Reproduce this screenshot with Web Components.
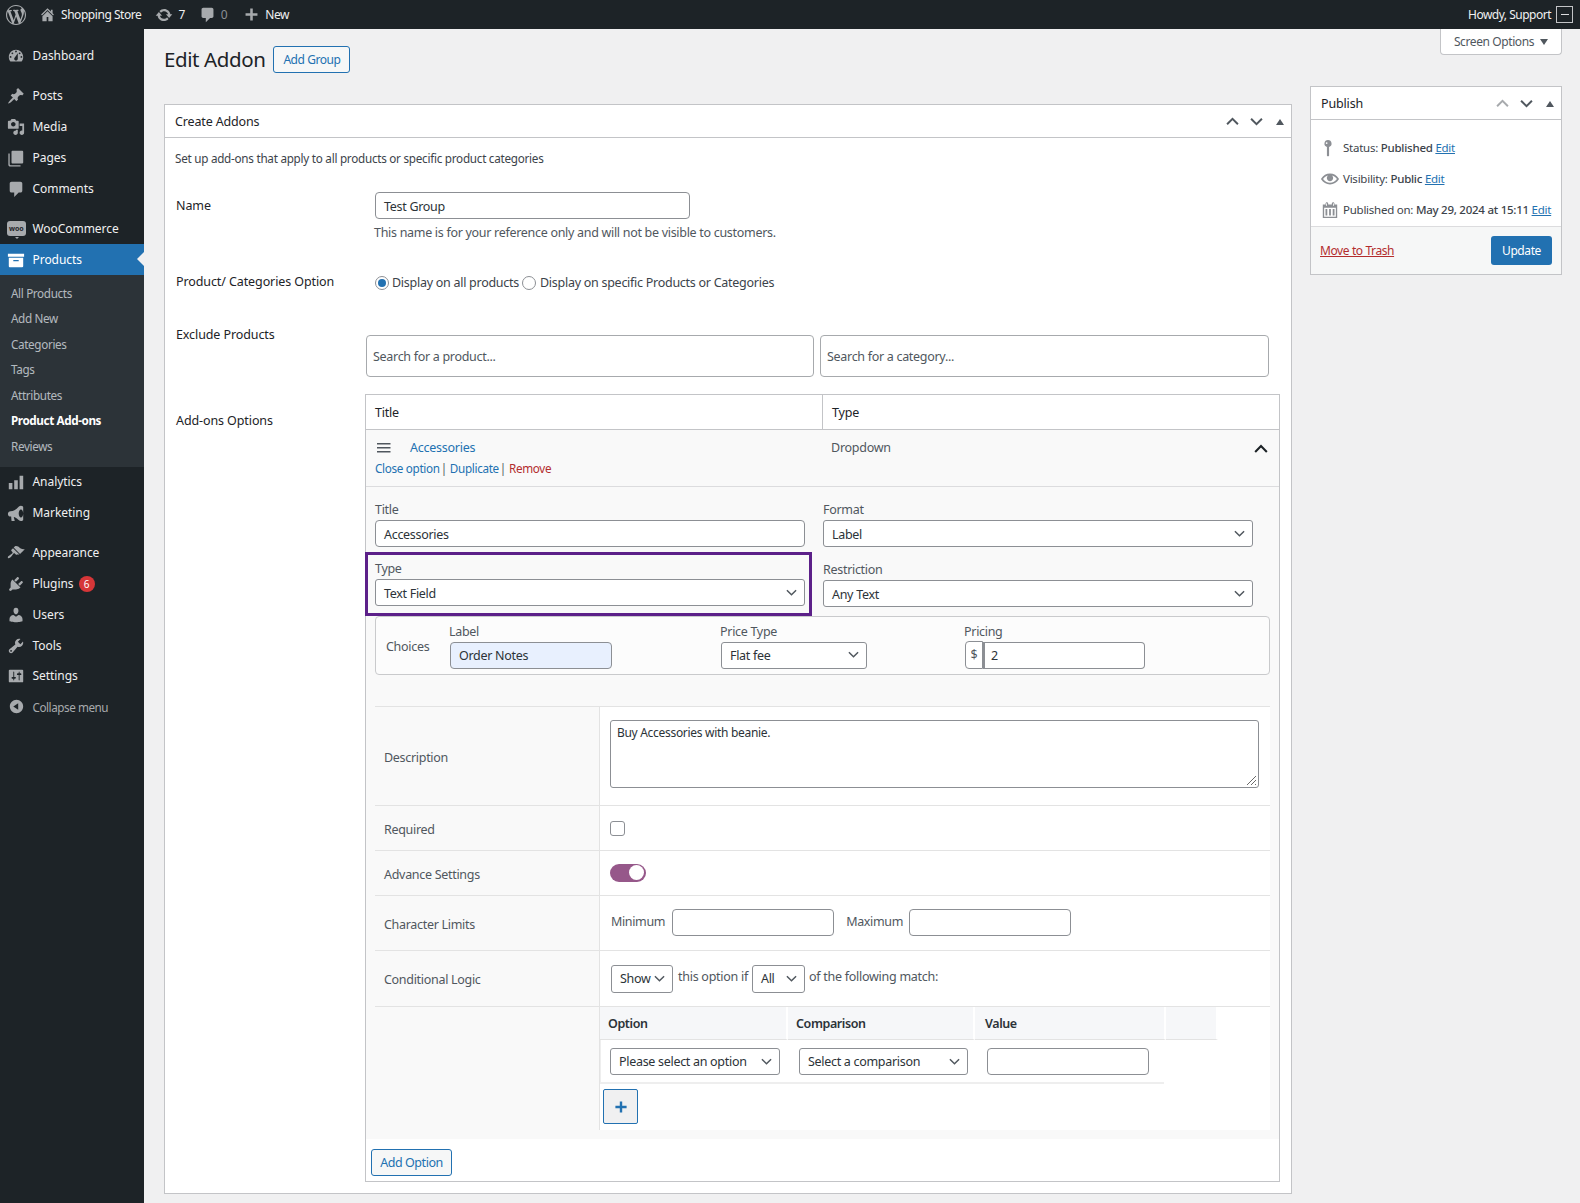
<!DOCTYPE html>
<html lang="en"><head><meta charset="utf-8"><title>Edit Addon</title>
<style>
html,body{margin:0;padding:0}
body{background:#f0f0f1;color:#3c434a;font:12px/16px "Noto Sans","Open Sans",sans-serif;letter-spacing:-.25px;min-height:1203px}
</style></head><body>
<wp-app></wp-app>
<script>
const base=`*{box-sizing:border-box}:host{display:block}a{color:#2271b1;text-decoration:none}`;
const P={
 wp:"M20 10c0-5.51-4.49-10-10-10C4.48 0 0 4.49 0 10c0 5.52 4.48 10 10 10 5.51 0 10-4.48 10-10zM7.78 15.37L4.37 6.22c.55-.02 1.17-.08 1.17-.08.5-.06.44-1.13-.06-1.11 0 0-1.45.11-2.37.11-.18 0-.37 0-.58-.01C4.12 2.69 6.87 1.11 10 1.11c2.33 0 4.45.87 6.05 2.34-.68-.11-1.65.39-1.65 1.58 0 .74.45 1.36.9 2.1.35.61.55 1.36.55 2.46 0 1.49-1.4 5-1.4 5l-3.03-8.37c.54-.02.82-.17.82-.17.5-.05.44-1.25-.06-1.22 0 0-1.44.12-2.38.12-.87 0-2.33-.12-2.33-.12-.5-.03-.56 1.2-.06 1.22l.92.08 1.26 3.41zM17.41 10c.24-.64.74-1.87.43-4.25.7 1.29 1.05 2.71 1.05 4.25 0 3.29-1.73 6.24-4.4 7.78.97-2.59 1.94-5.2 2.92-7.78zM6.1 18.09C3.12 16.65 1.11 13.53 1.11 10c0-1.3.23-2.48.72-3.59C3.25 10.3 4.67 14.2 6.1 18.09zm4.03-6.63l2.58 6.98c-.86.29-1.76.45-2.71.45-.79 0-1.57-.11-2.29-.33.81-2.38 1.62-4.74 2.42-7.1z",
 home:"M16 8.5l1.53 1.53-1.06 1.06L10 4.62l-6.47 6.47-1.06-1.06L10 2.5l4 4v-2h2v4zm-6-2.46l6 5.99V18h-5v-5H9v5H4v-5.97z",
 update:"M10.2 3.28c3.53 0 6.43 2.61 6.92 6h2.08l-3.5 4-3.5-4h2.32c-.45-1.97-2.21-3.45-4.32-3.45-1.45 0-2.73.71-3.54 1.78L4.95 5.66C6.23 4.2 8.11 3.28 10.2 3.28zm-.4 13.44c-3.52 0-6.43-2.61-6.92-6H.8l3.5-4c1.17 1.33 2.33 2.67 3.5 4H5.48c.45 1.97 2.21 3.45 4.32 3.45 1.45 0 2.73-.71 3.54-1.78l1.71 1.95c-1.28 1.46-3.15 2.38-5.25 2.38z",
 comment:"M5 2h10c1.1 0 2 .9 2 2v8c0 1.1-.9 2-2 2h-2l-5 5v-5H5c-1.1 0-2-.9-2-2V4c0-1.1.9-2 2-2z",
 plus:"M17 8.5v3h-5.5V17h-3v-5.5H3v-3h5.5V3h3v5.5z",
 dashboard:"M3.76 16h12.48c1.1-1.37 1.76-3.11 1.76-5 0-4.42-3.58-8-8-8s-8 3.58-8 8c0 1.89.66 3.63 1.76 5zM10 4c.55 0 1 .45 1 1s-.45 1-1 1-1-.45-1-1 .45-1 1-1zM6 6c.55 0 1 .45 1 1s-.45 1-1 1-1-.45-1-1 .45-1 1-1zm8 0c.55 0 1 .45 1 1s-.45 1-1 1-1-.45-1-1 .45-1 1-1zm-5.37 5.55L12 7v6c0 1.1-.9 2-2 2s-2-.9-2-2c0-.57.24-1.08.63-1.45zM4 10c.55 0 1 .45 1 1s-.45 1-1 1-1-.45-1-1 .45-1 1-1zm12 0c.55 0 1 .45 1 1s-.45 1-1 1-1-.45-1-1 .45-1 1-1z",
 pin:"M10.44 3.02l1.82-1.82 6.36 6.35-1.83 1.82c-1.05-.68-2.48-.57-3.41.36l-.75.75c-.92.93-1.04 2.35-.35 3.41l-1.83 1.82-2.41-2.41-2.8 2.79c-.42.42-3.38 2.71-3.8 2.29s1.86-3.39 2.28-3.81l2.79-2.79L4.1 9.36l1.83-1.82c1.05.69 2.48.57 3.4-.36l.75-.75c.93-.92 1.05-2.35.36-3.41z",
 media:"M13 11V4c0-.55-.45-1-1-1h-1.67L9 1H5L3.67 3H2c-.55 0-1 .45-1 1v7c0 .55.45 1 1 1h10c.55 0 1-.45 1-1zM7 4.5c1.38 0 2.5 1.12 2.5 2.5S8.38 9.5 7 9.5 4.5 8.38 4.5 7 5.62 4.5 7 4.5zM14 6h5v10.5c0 1.38-1.12 2.5-2.5 2.5S14 17.88 14 16.5s1.12-2.5 2.5-2.5c.17 0 .34.02.5.05V9h-3V6zm-4 8.05V13h2v3.5c0 1.38-1.12 2.5-2.5 2.5S7 17.88 7 16.5 8.12 14 9.5 14c.17 0 .34.02.5.05z",
 pages:"M6 2h11c.55 0 1 .45 1 1v12c0 .55-.45 1-1 1H6c-.55 0-1-.45-1-1V3c0-.55.45-1 1-1zM3 5v12c0 .55.45 1 1 1h11v1.5H3.5c-1 0-2-.8-2-2V5z",
 archive:"M19 3v3.5H1V3h18zM2 7.5h16V17c0 .55-.45 1-1 1H3c-.55 0-1-.45-1-1V7.5zM7 10v1.5h6V10H7z",
 analytics:"M2 11h4v7H2zM8 8h4v10H8zM14 3h4v15h-4z",
 marketing:"M18 3.5c0-.6-.7-1.5-2.5-1.5S12 4 11 5 7 8 4 8c-1.7 0-3 1.3-3 3s1.300 3 3 3h.6L5 18.500c.1.5.5.500 1 .500h2c.5 0 .7-.4.5-.8L7.500 14.500c1.500.300 3 1.200 3.500 1.700 1 1 2.700 2.800 4.500 2.800S18 18 18 17.500zM15.500 15c-1.400 0-2.500-2-2.500-4.500S14.100 6 15.500 6 18 8 18 10.500 16.900 15 15.500 15z",
 appearance:"M14.48 11.06L7.41 3.99l1.5-1.5c.5-.56 2.3-.47 3.51.32 1.21.8 1.43 1.28 2.91 2.1 1.18.64 2.45 1.26 4.45.85zm-.71.71L6.7 4.7 4.93 6.47c-.39.39-.39 1.02 0 1.41l1.06 1.06c.39.39.39 1.03 0 1.42-.6.6-1.43 1.11-2.21 1.69-.35.26-.7.53-1.01.84C1.43 13.23.4 14.84 1.1 15.54c.71.7 2.31-.33 3.65-1.67.31-.31.58-.66.85-1.01.57-.78 1.08-1.61 1.69-2.21.39-.39 1.02-.39 1.41 0l1.06 1.06c.39.39 1.02.39 1.41 0z",
 plugins:"M13.11 4.36L9.87 7.6 8 5.73l3.24-3.24c.35-.34 1.05-.2 1.56.32.52.51.66 1.21.31 1.55zm-8 1.77l.91-1.12 9.01 9.01-1.19.84c-.71.71-2.63 1.16-3.82 1.16H6.14L4.9 17.26c-.59.59-1.54.59-2.12 0-.59-.58-.59-1.53 0-2.12l1.24-1.24v-3.88c0-1.13.4-3.19 1.09-3.89zm7.26 3.97l3.24-3.24c.34-.35 1.04-.21 1.55.31.52.51.66 1.21.31 1.55l-3.24 3.25z",
 users:"M10 9.25c-2.27 0-2.73-3.44-2.73-3.44C7 4.02 7.82 2 9.97 2c2.16 0 2.98 2.02 2.71 3.81 0 0-.41 3.44-2.68 3.44zm0 2.57L12.72 10c2.39 0 4.52 2.33 4.52 4.53v2.49s-3.65 1.13-7.24 1.13c-3.65 0-7.24-1.13-7.24-1.13v-2.49c0-2.25 1.94-4.48 4.47-4.48z",
 tools:"M16.68 9.77c-1.34 1.34-3.3 1.67-4.95.99l-5.41 6.52c-.99.99-2.59.99-3.58 0s-.99-2.59 0-3.57l6.52-5.42c-.68-1.65-.35-3.61.99-4.95 1.28-1.28 3.12-1.62 4.72-1.06l-2.89 2.89 2.82 2.82 2.86-2.87c.53 1.58.18 3.39-1.08 4.65zM3.81 16.21c.4.39 1.04.39 1.43 0 .4-.4.4-1.04 0-1.43-.39-.4-1.03-.4-1.43 0-.39.39-.39 1.03 0 1.43z",
 settings:"M18 16V4c0-.55-.45-1-1-1H3c-.55 0-1 .45-1 1v12c0 .55.45 1 1 1h14c.55 0 1-.45 1-1zM8 11h1c.55 0 1 .45 1 1s-.45 1-1 1H8v1.5c0 .28-.22.5-.5.5s-.5-.22-.5-.5V13H6c-.55 0-1-.45-1-1s.45-1 1-1h1V5.5c0-.28.22-.5.5-.5s.5.22.5.5V11zm5-2h-1c-.55 0-1-.45-1-1s.45-1 1-1h1V5.500c0-.28.22-.5.5-.5s.5.22.5.5V7h1c.55 0 1 .45 1 1s-.45 1-1 1h-1v5.500c0 .28-.22.5-.5.5s-.5-.22-.5-.5V9z",
 collapse:"M10 2.16c4.33 0 7.84 3.51 7.84 7.84s-3.51 7.84-7.84 7.84S2.16 14.33 2.16 10 5.71 2.160 10 2.160zm2 11.72V6.120L6.180 9.970z",
 key:"M10 1a4 4 0 0 1 1.200 7.800V18.500L10 19.500 8.800 18.500V8.800A4 4 0 0 1 10 1zM8.500 3.500a1 1 0 1 0 0 2 1 1 0 0 0 0-2z",
 eye:"M19.700 9.400C17.700 6 14 3.900 10 3.900S2.300 6 .3 9.400L0 10l.3.6c2 3.400 5.700 5.500 9.700 5.500s7.700-2.100 9.700-5.500l.3-.6-.3-.6zM10 14.100c-3.100 0-6-1.600-7.700-4.100C3.600 8 5.700 6.600 8 6.100c-.9.600-1.500 1.700-1.500 2.900 0 1.900 1.600 3.500 3.500 3.500s3.500-1.600 3.500-3.500c0-1.200-.6-2.300-1.500-2.900 2.300.5 4.400 1.900 5.700 3.900-1.700 2.500-4.600 4.100-7.700 4.100z",
 cal:"M15 4h3v15H2V4h3V3c0-.41.15-.76.44-1.060.29-.29.65-.44 1.060-.44s.77.15 1.060.44c.29.3.44.65.44 1.060v1h4V3c0-.41.15-.76.44-1.060.29-.29.65-.44 1.060-.44s.77.15 1.060.44c.29.3.44.65.44 1.060v1zM6 5.500c.28 0 .5-.22.5-.5V3c0-.28-.22-.5-.5-.5S5.500 2.720 5.500 3v2c0 .28.22.5.5.5zm8 0c.28 0 .5-.22.5-.5V3c0-.28-.22-.5-.5-.5s-.5.22-.5.5v2c0 .28.22.5.5.5zM16.500 17.500V7.500h-13v10zM5 9h2v7H5zM9 9h2v7H9zM13 9h2v7h-2z"
};
const ico=(n,s=20,c='currentColor')=>`<svg width="${s}" height="${s}" viewBox="0 0 20 20" fill="${c}" fill-rule="evenodd" aria-hidden="true"><path d="${P[n]}"/></svg>`;
const chev=(dir,s=12,c='#50575e',w=2)=>`<svg width="${s}" height="${s}" viewBox="0 0 12 12" fill="none" stroke="${c}" stroke-width="${w}" aria-hidden="true"><path d="${dir=='up'?'M1 8.500 6 3.500l5 5':'M1 3.500l5 5 5-5'}"/></svg>`;
function def(tag,css,html){customElements.define(tag,class extends HTMLElement{connectedCallback(){if(this.shadowRoot)return;const r=this.attachShadow({mode:'open'});r.innerHTML=`<style>${base}${css}</style>`+(typeof html=='function'?html(this):html)}})}

def('wp-adminbar',`:host{height:29px;background:#1d2327;color:#f0f0f1;display:flex;align-items:center;font-size:12px;letter-spacing:-.45px}
 svg{color:#a7aaad;flex:none;display:block} .l{display:flex;align-items:center;flex:1}
 .avatar{width:17px;height:17px;border:1px solid #c3c4c7;margin:0 7px 0 5px;display:flex;align-items:center;justify-content:center}
 .avatar i{width:8px;height:1px;background:#dcdcde;display:block}
 .dim{color:#8c8f94}`,
`<div class="l"><span style="margin-left:6px;display:flex">${ico('wp',20)}</span>
 <span style="margin-left:13px;display:flex">${ico('home',17)}</span><span style="margin-left:5px">Shopping Store</span>
 <span style="margin-left:14px;display:flex">${ico('update',18)}</span><span style="margin-left:5px">7</span>
 <span style="margin-left:14px;display:flex">${ico('comment',17)}</span><span class="dim" style="margin-left:5px">0</span>
 <span style="margin-left:16px;display:flex">${ico('plus',17)}</span><span style="margin-left:5px">New</span></div>
 <span style="letter-spacing:-.5px">Howdy, Support</span><span class="avatar"><i></i></span>`);

def('wp-menu-item',`:host{display:flex;height:31px;align-items:center;color:#f0f0f1;position:relative;letter-spacing:-.05px}
 :host([sep]){margin-top:9px}
 :host([tight]){margin-top:-.5px}
 :host([current]){background:#2271b1;color:#fff}
 :host([dim]){color:#a7aaad;font-size:11.7px;letter-spacing:-.45px}
 .i{width:32.500px;display:flex;justify-content:center;color:#a7aaad;flex:none}
 :host([current]) .i{color:#fff}
 .b{margin-left:5px;width:16px;height:16px;border-radius:50%;background:#d63638;color:#fff;font-size:10px;line-height:16px;text-align:center}
 .n{position:absolute;right:0;top:8px;border:7.500px solid transparent;border-left:0;border-right:7px solid #f0f0f1}
 .woo{width:19px;height:15px;background:#a7aaad;border-radius:3px;color:#1d2327;font-size:7px;line-height:15px;text-align:center;font-weight:700;position:relative}
 .woo:after{content:"";position:absolute;left:8px;bottom:-3px;border:2px solid transparent;border-top-color:#a7aaad;border-bottom:0}`,
 h=>{const n=h.getAttribute('icon');return `<span class="i">${n=='woo'?'<span class="woo">woo</span>':ico(n,n=='collapse'?17:18)}</span><span><slot></slot></span>`+(h.hasAttribute('badge')?`<span class="b">${h.getAttribute('badge')}</span>`:'')+(h.hasAttribute('current')?'<span class="n"></span>':'')});

def('wp-sub-item',`:host{height:25.600px;line-height:25.600px;padding-left:11px;color:rgba(240,246,252,.7);font-size:11.700px;letter-spacing:-.35px}
 :host([active]){color:#fff;font-weight:700;letter-spacing:-.4px}`,`<slot></slot>`);

def('wp-sidebar',`:host{background:#1d2327;padding-top:11px;min-height:1174px}
 .sub{background:#2c3338;padding:5.500px 0 7px}`,
`<wp-menu-item icon="dashboard">Dashboard</wp-menu-item>
<wp-menu-item icon="pin" sep>Posts</wp-menu-item><wp-menu-item icon="media">Media</wp-menu-item><wp-menu-item icon="pages">Pages</wp-menu-item><wp-menu-item icon="comment">Comments</wp-menu-item>
<wp-menu-item icon="woo" sep>WooCommerce</wp-menu-item><wp-menu-item icon="archive" current>Products</wp-menu-item>
<div class="sub"><wp-sub-item>All Products</wp-sub-item><wp-sub-item>Add New</wp-sub-item><wp-sub-item>Categories</wp-sub-item><wp-sub-item>Tags</wp-sub-item><wp-sub-item>Attributes</wp-sub-item><wp-sub-item active>Product Add-ons</wp-sub-item><wp-sub-item>Reviews</wp-sub-item></div>
<wp-menu-item icon="analytics">Analytics</wp-menu-item><wp-menu-item icon="marketing">Marketing</wp-menu-item>
<wp-menu-item icon="appearance" sep>Appearance</wp-menu-item><wp-menu-item icon="plugins" badge="6">Plugins</wp-menu-item><wp-menu-item icon="users">Users</wp-menu-item><wp-menu-item icon="tools" tight>Tools</wp-menu-item><wp-menu-item icon="settings" tight>Settings</wp-menu-item><wp-menu-item icon="collapse" dim tight>Collapse menu</wp-menu-item>`);

def('wp-btn',`:host{display:inline-flex;align-items:center;justify-content:center;height:27px;border:1px solid #2271b1;border-radius:3px;background:#f6f7f7;color:#2271b1;white-space:nowrap;letter-spacing:-.45px}`,`<slot></slot>`);
def('wp-input',`:host{display:flex;align-items:center;height:27px;border:1px solid #8c8f94;border-radius:4px;background:#fff;padding:0 8px;color:#2c3338;white-space:nowrap;flex:none;font-size:12.500px;letter-spacing:-.3px}
 :host([filled]){background:#e8f0fe}
 :host([ph]){height:42px;color:#50575e;padding:2px 6px 0;border-color:#a7aaad}`,`<slot></slot>`);
def('wp-select',`:host{display:flex;align-items:center;justify-content:space-between;height:27px;border:1px solid #8c8f94;border-radius:3px;background:#fff;padding:0 7px 0 8px;color:#2c3338;white-space:nowrap;flex:none;font-size:12.500px;letter-spacing:-.3px}
 svg{transform:translateY(-1px)}`,`<slot></slot>${chev('down',11,'#50575e',1.600)}`);
def('wp-box',`:host{background:#fff;border:1px solid #c3c4c7}
 .h{height:33px;border-bottom:1px solid #c3c4c7;display:flex;align-items:center;padding:1px 7px 0 10px;color:#1d2327;font-size:12.500px;letter-spacing:-.15px}
 .t{flex:1}.c{display:flex;width:23.500px;justify-content:center}
 .tri{width:0;height:0;border:4.500px solid transparent;border-top:0;border-bottom:6px solid #50575e;margin-left:8px}`,
 h=>`<div class="h"><span class="t">${h.getAttribute('title')}</span><span class="c">${chev('up',13,h.hasAttribute('fade')?'#a7aaad':'#50575e',1.800)}</span><span class="c">${chev('down',13,'#50575e',1.800)}</span><span class="tri"></span></div><slot></slot>`);

def('wp-publish',`:host{font-size:11.500px;letter-spacing:-.25px} .r{display:flex;align-items:center;height:31px;padding-left:10px;white-space:nowrap}
 .b{padding-top:12px;padding-bottom:1px}.r svg{flex:none;margin-right:4px;color:#8c8f94}
 .r svg.k{margin:0 6px 0 -2px}
 b{font-weight:500;color:#3c434a} a{text-decoration:underline}
 .f{height:48px;background:#f6f7f7;border-top:1px solid #dcdcde;display:flex;align-items:center;justify-content:space-between;padding:0 9px 0 9px;font-size:12px;letter-spacing:-.4px}
 .f a{color:#b32d2e;margin:0} .u{height:29px;width:61px;border-radius:3px;background:#2271b1;color:#fff;display:flex;align-items:center;justify-content:center}`,
`<div class="b"><div class="r">${ico('key',18).replace('<svg','<svg class="k"')}<span>Status: <b>Published</b> <a>Edit</a></span></div>
<div class="r">${ico('eye',18)}<span>Visibility: <b>Public</b> <a>Edit</a></span></div>
<div class="r">${ico('cal',18)}<span>Published on: <b>May 29, 2024 at 15:11</b> <a>Edit</a></span></div></div>
<div class="f"><a>Move to Trash</a><span class="u">Update</span></div>`);

def('addon-row',`:host{display:grid;grid-template-columns:224px 671px;width:895px;border-top:1px solid #e3e3e3;color:#50575e;letter-spacing:-.3px}
 .l{padding:3px 0 0 9px;display:flex;align-items:center}
 .r{background:#fff;border-left:1px solid #e3e3e3;padding-left:10px;display:flex;align-items:center}
 :host([tall]) .r{padding-left:0;display:block}`,h=>`<div class="l" style="${h.hasAttribute('tall')?'align-items:start':''}">${h.getAttribute('label')||''}</div><div class="r" style="height:${h.getAttribute('h')}px"><slot></slot></div>`);

def('addon-subtable',`:host{color:#1d2327}
 .g{display:grid;grid-template-columns:188px 187px 189px 54px}
 .h{grid-template-columns:188px 187px 191px 52px}
 .h>div{background:#f6f7f9;height:33px;padding-top:1px;border-bottom:1px solid #e3e3e3;border-right:2px solid #fff;padding-left:8px;display:flex;align-items:center;font-weight:600;color:#2c3338;letter-spacing:-.4px}
 .h>div:nth-child(3){padding-left:10px}
 .c{height:44px;border-bottom:2px solid #eee;display:flex;align-items:center;padding-left:9px;border-left:1px solid #eee}
 .c+.c{padding-left:11px;border-left:0}
 .c+.c+.c{padding-left:12px}
 .c wp-select{padding-top:2px}
 .p{margin:5px 0 0 3px;width:35px;height:35px;border:1px solid #2271b1;border-radius:2px;background:#f0f0f1;color:#2271b1;display:flex;align-items:center;justify-content:center}`,
`<div class="g h"><div>Option</div><div>Comparison</div><div>Value</div><div></div></div>
<div class="g"><div class="c"><wp-select style="width:170px">Please select an option</wp-select></div><div class="c"><wp-select style="width:169px">Select a comparison</wp-select></div><div class="c"><wp-input style="width:162px"></wp-input></div></div>
<div class="p">${ico('plus',16)}</div>`);

def('addon-item',`:host{border:1px solid #c3c4c7;width:915px;color:#3c434a}
 .th{display:grid;grid-template-columns:457px 1fr;height:35px;border-bottom:1px solid #c3c4c7;color:#1d2327;font-size:12.500px;letter-spacing:-.2px}
 .th div{display:flex;align-items:center;padding:2px 0 0 9px}.th div:first-child{border-right:1px solid #c3c4c7}
 .it{background:#f9f9f9;height:57px;border-bottom:1px solid #dcdcde;padding:9px 0 0 9px;display:grid;grid-template-columns:456px 1fr 27px;grid-template-rows:20px 20px}
 .ham{display:flex;align-items:center;gap:19px;margin-top:-3px;font-size:12.500px;letter-spacing:-.25px}.ham svg{margin-left:2px}
 .ln{grid-column:1/3;margin-top:1px;white-space:nowrap;letter-spacing:-.32px;font-size:11.700px;display:flex}.ln i{font-style:normal;color:#50575e;margin:0 3px 0 1px}.ln .rm{color:#b32d2e}
 .form{background:#f9f9f9;padding:14px 0 9px 9px;letter-spacing:-.3px}
 .two{display:grid;grid-template-columns:430px 430px;column-gap:18px}
 .lab{height:16px;color:#50575e;display:block;white-space:nowrap}
 .first .lab{line-height:18px}
 .first wp-input,.hi wp-select,.first wp-select{padding-top:2px}
 .hi{position:relative;margin-top:14px}
 .frame{position:absolute;left:-10px;top:-9px;width:447px;height:64px;border:3px solid #5c2089;pointer-events:none}
 .ch{margin-top:9px;width:895px;height:59px;border:1px solid #c9cacc;border-radius:4px;background:#fcfcfc;display:grid;grid-template-columns:64px 271px 244px 1fr;padding:7px 0 0 10px;color:#50575e}
 .ch .t{padding-top:15px}.ch wp-input,.ch wp-select{margin-top:2px}
 .tb{margin-top:31px}
 .pr{display:flex}.pr span{width:18px;height:28px;margin-top:1px;border:1px solid #8c8f94;border-radius:4px 0 0 4px;display:flex;align-items:center;justify-content:center;background:#fff}
 .pr wp-input{border-radius:0 4px 4px 0;border-left-width:2px;width:162px;padding-left:6px}
 .area{width:649px;height:68px;border:1px solid #8c8f94;border-radius:3px;background:#fff;padding:4px 6px;position:relative;color:#2c3338;margin-top:-4px;font-size:12px;letter-spacing:-.3px}
 .area svg{position:absolute;right:1px;bottom:1px}
 .cb{width:15px;height:15px;border:1px solid #8c8f94;border-radius:3px;background:#fff;margin-top:1px}
 .tg{width:36px;height:18px;border-radius:9px;background:#96588a;display:flex;justify-content:flex-end;align-items:center;padding:0 2px;margin-top:-1px}.tg i{width:15px;height:15px;background:#fff;border-radius:50%;display:block}
 .fl{display:flex;align-items:center;color:#50575e;white-space:nowrap;letter-spacing:-.35px}
 .add{background:#fff;padding:10px 0 5px 5px}.add wp-btn{width:81px}`,
`<div class="th"><div>Title</div><div>Type</div></div>
<div class="it"><div class="ham"><svg width="14" height="10" viewBox="0 0 14 10" fill="#50575e"><path d="M0 0h13.500v1.500H0zM0 4h13.500v1.500H0zM0 8h13.500v1.500H0z"/></svg><a>Accessories</a></div><div style="color:#50575e;padding-top:1px;font-size:12.500px;letter-spacing:-.25px">Dropdown</div><div style="margin:3px 0 0 2px">${chev('up',14,'#1d2327',1.800)}</div>
<div class="ln"><a>Close option</a><i>|</i><a>Duplicate</a><i>|</i><a class="rm">Remove</a></div></div>
<div class="form">
 <div class="two first"><div><span class="lab">Title</span><wp-input style="margin-top:3px">Accessories</wp-input></div><div><span class="lab">Format</span><wp-select style="margin-top:3px">Label</wp-select></div></div>
 <div class="two hi"><div><div class="frame"></div><span class="lab">Type</span><wp-select style="margin-top:2px">Text Field</wp-select></div><div style="padding-top:1px"><span class="lab">Restriction</span><wp-select style="margin-top:2px">Any Text</wp-select></div></div>
 <div class="ch"><div class="t">Choices</div><div><span class="lab" style="margin-left:-1px">Label</span><wp-input filled style="width:162px">Order Notes</wp-input></div><div><span class="lab" style="margin-left:-1px">Price Type</span><wp-select style="width:146px">Flat fee</wp-select></div><div><span class="lab" style="margin-left:-1px">Pricing</span><div class="pr"><span>$</span><wp-input>2</wp-input></div></div></div>
 <div class="tb">
  <addon-row label="Description" h="98"><div class="area">Buy Accessories with beanie.<svg width="12" height="12" viewBox="0 0 12 12" stroke="#6a6a6a"><path d="M2 11 11 2M6 11l5-5M10 11l1-1"/></svg></div></addon-row>
  <addon-row label="Required" h="44"><div class="cb"></div></addon-row>
  <addon-row label="Advance Settings" h="44"><div class="tg"><i></i></div></addon-row>
  <addon-row label="Character Limits" h="54"><div class="fl" style="margin:-2px 0 0 1px">Minimum<wp-input style="width:162px;margin:0 12px 0 7px"></wp-input>Maximum<wp-input style="width:162px;margin-left:6px"></wp-input></div></addon-row>
  <addon-row label="Conditional Logic" h="55"><div class="fl" style="margin-top:1px;font-size:12.500px;letter-spacing:-.27px"><wp-select style="width:62px;height:28px;margin:0 5px 0 1px">Show</wp-select><span style="margin-top:-4px">this option if</span><wp-select style="width:53px;height:28px;margin:0 4px">All</wp-select><span style="margin-top:-4px">of the following match:</span></div></addon-row>
  <addon-row tall label="" h="123"><addon-subtable></addon-subtable></addon-row>
 </div>
</div>
<div class="add"><wp-btn>Add Option</wp-btn></div>`);

def('addon-form',`:host{color:#1d2327;padding:0 11px 11px 10px;font-size:12.500px;letter-spacing:-.1px}
 .d{padding-top:12px;color:#3c434a;height:28px;font-size:11.700px;letter-spacing:-.26px;white-space:nowrap}
 .row{display:grid;grid-template-columns:191px 1fr}
 .row>div:first-child{padding-left:1px}
 .help{color:#50575e;margin:6px 0 0 -1px;height:16px;letter-spacing:-.3px;white-space:nowrap}
 .radios{display:flex;align-items:center;padding-left:9px!important;color:#3c434a;white-space:nowrap;letter-spacing:-.27px}
 .ra{width:14px;height:14px;border:1px solid #8c8f94;border-radius:50%;background:#fff;margin-right:3px;display:flex;align-items:center;justify-content:center;flex:none}
 .ra i{width:8px;height:8px;border-radius:50%;background:#2271b1;display:block}
 .s{display:flex;gap:6px}`,
`<div class="d">Set up add-ons that apply to all products or specific product categories</div>
<div class="row" style="margin-top:26px"><div style="margin-top:6px">Name</div><div style="padding-left:9px"><wp-input style="width:315px;padding-top:2px">Test Group</wp-input><div class="help">This name is for your reference only and will not be visible to customers.</div></div></div>
<div class="row" style="margin-top:34px"><div style="margin-top:-1px">Product/ Categories Option</div><div class="radios"><span class="ra"><i></i></span>Display on all products<span class="ra" style="margin:0 4px 0 3px"></span>Display on specific Products or Categories</div></div>
<div class="row" style="margin-top:44px"><div style="margin-top:-8px">Exclude Products</div><div class="s"><wp-input ph style="width:448px">Search for a product...</wp-input><wp-input ph style="width:449px">Search for a category...</wp-input></div></div>
<div class="row" style="margin-top:17px;grid-template-columns:190px 1fr"><div style="margin-top:19px">Add-ons Options</div><addon-item></addon-item></div>`);

def('wp-app',`:host{display:block}
 .lay{display:grid;grid-template-columns:144px 1fr}
 .main{display:grid;grid-template-columns:1128px 252px;column-gap:18px;padding:0 18px 0 20px;align-items:start}
 .hd{display:flex;align-items:center;margin:17px 0 31px;height:27px}
 h1{margin:0 8px 0 0;font-size:20.500px;font-weight:400;line-height:27px;color:#1d2327;letter-spacing:-.4px}
 .hd wp-btn{width:77px}
 .so{display:flex;justify-content:flex-end;margin-bottom:31px}
 .so div{width:122px;height:26px;background:#fff;border:1px solid #c3c4c7;border-top:0;border-radius:0 0 4px 4px;color:#50575e;display:flex;align-items:center;justify-content:center;gap:6px;letter-spacing:-.4px}
 .so i{border:4px solid transparent;border-top:6px solid #50575e;border-bottom:0;display:block;width:0}`,
`<wp-adminbar></wp-adminbar>
<div class="lay"><wp-sidebar></wp-sidebar><div class="main">
 <div><div class="hd"><h1>Edit Addon</h1><wp-btn>Add Group</wp-btn></div>
 <wp-box title="Create Addons"><addon-form></addon-form></wp-box></div>
 <div><div class="so"><div>Screen Options<i></i></div></div>
 <wp-box title="Publish" fade><wp-publish></wp-publish></wp-box></div>
</div></div>`);
</script>
</body></html>
